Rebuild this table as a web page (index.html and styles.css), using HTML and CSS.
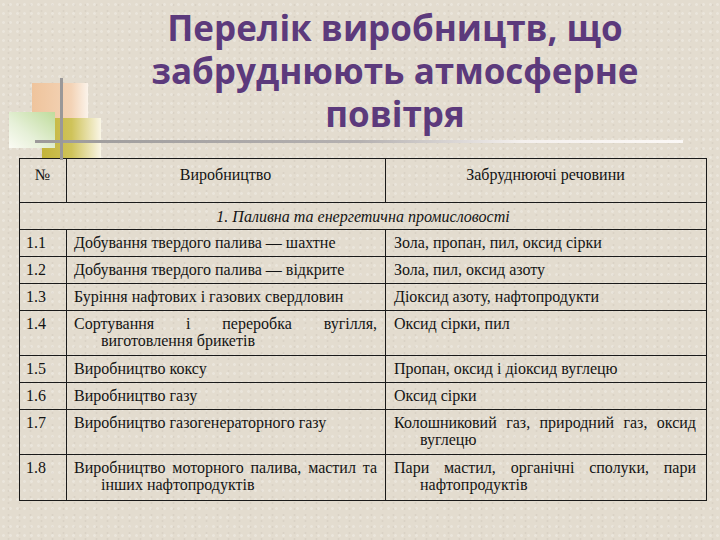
FILE: index.html
```html
<!DOCTYPE html>
<html lang="uk">
<head>
<meta charset="utf-8">
<title>Перелік виробництв</title>
<link rel="stylesheet" href="styles.css">
</head>
<body>
<div class="slide">
  <header class="head">
    <svg class="deco" width="720" height="160" viewBox="0 0 720 160" aria-hidden="true">
      <defs>
        <linearGradient id="peach" x1="0" y1="0" x2="1" y2="0">
          <stop offset="0" stop-color="#efc49c"/>
          <stop offset="0.7" stop-color="#f3d3b6"/>
          <stop offset="1" stop-color="#fbf3ea"/>
        </linearGradient>
        <linearGradient id="green" x1="1" y1="0" x2="0" y2="1">
          <stop offset="0" stop-color="#bfdc9c"/>
          <stop offset="0.6" stop-color="#e6f0d8"/>
          <stop offset="1" stop-color="#fbfbf4"/>
        </linearGradient>
        <linearGradient id="olive" x1="0" y1="0" x2="1" y2="0">
          <stop offset="0" stop-color="#c3b43a"/>
          <stop offset="0.5" stop-color="#cfc35a"/>
          <stop offset="1" stop-color="#faf6e6"/>
        </linearGradient>
        <linearGradient id="hline" x1="0" y1="0" x2="1" y2="0">
          <stop offset="0" stop-color="#9c9a9a"/>
          <stop offset="0.5" stop-color="#b4b0b0"/>
          <stop offset="0.75" stop-color="#f4f0ee"/>
          <stop offset="1" stop-color="#fbf8f6"/>
        </linearGradient>
      </defs>
      <rect x="32" y="83" width="56" height="40" fill="url(#peach)"/>
      <rect x="42" y="118" width="59" height="40" fill="url(#olive)"/>
      <rect x="9" y="112" width="46" height="36" fill="url(#green)"/>
      <rect x="35" y="140" width="648" height="3" fill="url(#hline)"/>
      <rect x="60" y="78" width="3" height="82" fill="#9a9898"/>
    </svg>
    <h1 class="title">Перелік виробництв, що<br>забруднюють атмосферне<br>повітря</h1>
  </header>
  <table class="grid">
    <colgroup>
      <col class="c-num">
      <col class="c-prod">
      <col class="c-sub">
    </colgroup>
    <thead>
      <tr class="hrow">
        <th>№</th>
        <th>Виробництво</th>
        <th>Забруднюючі речовини</th>
      </tr>
    </thead>
    <tbody>
      <tr class="srow"><td colspan="3">1. Паливна та енергетична промисловості</td></tr>
      <tr class="r1"><td>1.1</td><td>Добування твердого палива — шахтне</td><td>Зола, пропан, пил, оксид сірки</td></tr>
      <tr class="r1"><td>1.2</td><td>Добування твердого палива — відкрите</td><td>Зола, пил, оксид азоту</td></tr>
      <tr class="r1"><td>1.3</td><td>Буріння нафтових і газових свердловин</td><td>Діоксид азоту, нафтопродукти</td></tr>
      <tr class="r2"><td>1.4</td><td>Сортування і переробка вугілля, виготовлення брикетів</td><td>Оксид сірки, пил</td></tr>
      <tr class="r1"><td>1.5</td><td>Виробництво коксу</td><td>Пропан, оксид і діоксид вуглецю</td></tr>
      <tr class="r1"><td>1.6</td><td>Виробництво газу</td><td>Оксид сірки</td></tr>
      <tr class="r2"><td>1.7</td><td>Виробництво газогенераторного газу</td><td>Колошниковий газ, природний газ, оксид вуглецю</td></tr>
      <tr class="r3"><td>1.8</td><td>Виробництво моторного палива, мастил та інших нафтопродуктів</td><td>Пари мастил, органічні сполуки, пари нафтопродуктів</td></tr>
    </tbody>
  </table>
</div>
</body>
</html>
```

FILE: styles.css
```css
html, body {
  margin: 0;
  padding: 0;
}
body {
  background-color: #e3dccf;
  background-image:
    radial-gradient(rgba(255,255,255,0.25) 1px, transparent 1.5px),
    radial-gradient(rgba(150,140,120,0.12) 1px, transparent 1.5px);
  background-size: 7px 9px, 11px 6px;
  background-position: 0 0, 3px 2px;
  width: 720px;
  height: 540px;
  overflow: hidden;
}
.slide {
  width: 720px;
  height: 540px;
}
.head {
  position: relative;
  height: 158px;
}
.deco {
  position: absolute;
  left: 0;
  top: 0;
}
.title {
  position: relative;
  margin: 0;
  padding: 6px 0 0 70px;
  text-align: center;
  font-family: "Open Sans", sans-serif;
  font-weight: 700;
  font-size: 35px;
  line-height: 43px;
  color: #5c3a7c;
}
.grid {
  margin-left: 19px;
  width: 687px;
  border-collapse: collapse;
  table-layout: fixed;
  font-family: "Liberation Serif", serif;
  font-size: 16px;
  line-height: 17px;
  color: #141414;
}
.c-num { width: 47px; }
.c-prod { width: 319px; }
.c-sub { width: 321px; }
.grid th, .grid td {
  font-family: "Liberation Serif", serif;
  border: 1.5px solid #1a1a1a;
  vertical-align: top;
  text-align: justify;
  padding: 4px 8px 0 7px;
}
.grid td:first-child {
  padding-left: 6px;
  text-align: left;
}
.grid td:nth-child(2) {
  padding-left: 34px;
  text-indent: -27px;
}
.grid td:nth-child(3) {
  padding-left: 34px;
  text-indent: -26px;
  padding-right: 10px;
}
.grid .hrow th {
  height: 44px;
  box-sizing: border-box;
  font-weight: 400;
  font-size: 16px;
  text-align: center;
  padding-top: 7px;
}
.grid .srow td {
  height: 27px;
  box-sizing: border-box;
  font-style: italic;
  text-align: center;
  padding: 5px 0 0 0;
  text-indent: 0;
}
.r1 td { height: 27px; box-sizing: border-box; }
.r2 td { height: 45px; box-sizing: border-box; }
.r3 td { height: 46px; box-sizing: border-box; }
```
